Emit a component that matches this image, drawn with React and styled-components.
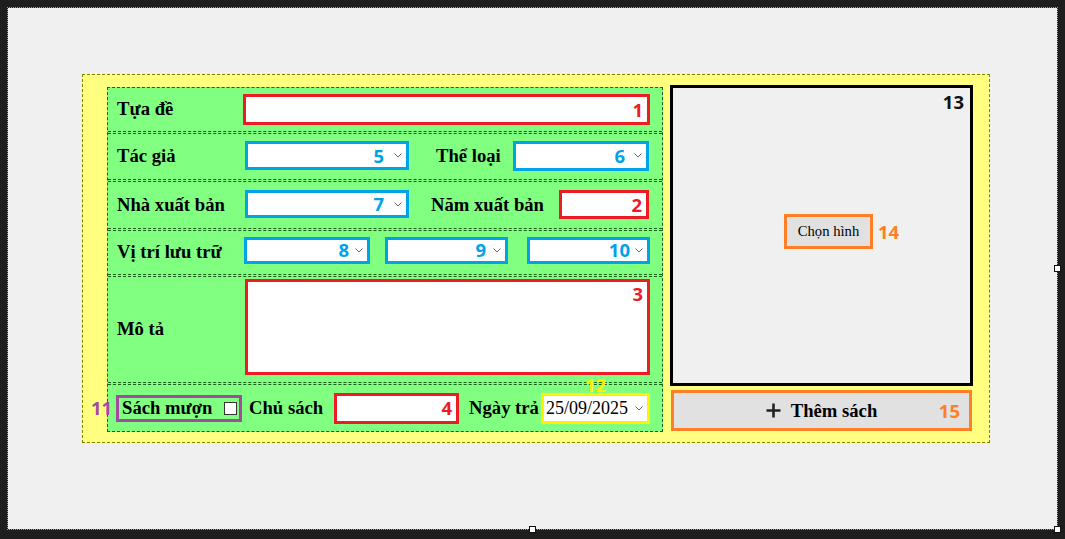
import React from "react";
import styled, { createGlobalStyle } from "styled-components";

const GlobalStyle = createGlobalStyle`
  html, body { margin: 0; padding: 0; background: #1e1e1e; }
  body { font-family: "Liberation Serif", "Times New Roman", serif; }
  * { box-sizing: border-box; }
`;

const RED = "#ed1c24";
const BLUE = "#00a2e8";
const ORANGE = "#ff7f27";
const PURPLE = "#a349a4";
const YELLOW = "#fff200";

const Screen = styled.div`
  position: relative;
  width: 1065px;
  height: 539px;
  padding: 8px 8px 10px 8px;
  background: #1e1e1e;
  overflow: hidden;
`;

const Canvas = styled.div`
  width: 100%;
  height: 100%;
  background: #f0f0f0;
  outline: 1px dotted #9a9a9a;
  padding: 66px 0 0 74px;
`;

const Handle = styled.span`
  position: absolute;
  left: ${(p) => p.x}px;
  top: ${(p) => p.y}px;
  width: 7px;
  height: 7px;
  background: #fff;
  border: 1px solid #111;
`;

const Board = styled.div`
  width: 908px;
  height: 369px;
  background: #ffff80;
  border: 1px dashed #808000;
  display: flex;
  align-items: flex-start;
  padding: 10px 0 0 24px;
`;

const Table = styled.div`
  width: 556px;
  height: 345px;
  margin-top: 2px;
  background: #80ff80;
  border: 1px dashed #1d5e1d;
  display: flex;
  flex-direction: column;
  gap: 1px;
`;

const Row = styled.div`
  height: ${(p) => p.h}px;
  display: flex;
  align-items: center;
  border-top: ${(p) => (p.first ? "none" : "1px dashed #1d5e1d")};
  border-bottom: ${(p) => (p.last ? "none" : "1px dashed #1d5e1d")};
  padding-left: ${(p) => p.pad || 0}px;
`;

const Label = styled.div`
  width: ${(p) => p.w}px;
  padding-left: ${(p) => p.pl}px;
  flex-shrink: 0;
  font-weight: 700;
  font-size: 18.67px;
  line-height: 1;
  color: #000;
  white-space: nowrap;
`;

const Num = styled.span`
  font-family: "Open Sans", "DejaVu Sans", sans-serif;
  font-weight: 700;
  font-size: 18.5px;
  line-height: 18px;
  color: ${(p) => p.c};
`;

const TextBox = styled.div`
  position: relative;
  width: ${(p) => p.w}px;
  height: ${(p) => p.h}px;
  flex-shrink: 0;
  margin-bottom: ${(p) => p.lift || 0}px;
  background: #fff;
  border: 3px solid ${(p) => p.c};
  display: flex;
  justify-content: flex-end;
  align-items: ${(p) => (p.top ? "flex-start" : "center")};
  padding: ${(p) => (p.top ? "3px 4px 0 0" : "0 4px 0 0")};
`;

const Combo = styled.div`
  width: ${(p) => p.w}px;
  height: ${(p) => p.h}px;
  flex-shrink: 0;
  margin-bottom: ${(p) => p.lift || 0}px;
  background: #fff;
  border: 3px solid ${BLUE};
  display: flex;
  justify-content: flex-end;
  align-items: center;
  gap: ${(p) => p.gap}px;
  padding-right: 4px;
`;

const Spacer = styled.div`
  width: ${(p) => p.w}px;
  flex-shrink: 0;
`;

const Borrow = styled.div`
  position: relative;
  width: 126px;
  height: 27px;
  flex-shrink: 0;
  border: 3px solid ${PURPLE};
  display: flex;
  align-items: center;
  justify-content: space-between;
  padding: 0 2px 0 3px;
  font-weight: 700;
  font-size: 18.67px;
  line-height: 1;
`;

const Check = styled.span`
  width: 13px;
  height: 13px;
  background: #fff;
  border: 1px solid #333;
`;

const Badge = styled.div`
  position: absolute;
  left: ${(p) => p.left}px;
  top: ${(p) => p.top}px;
`;

const DateBox = styled.div`
  position: relative;
  width: 109px;
  height: 31px;
  flex-shrink: 0;
  background: #fff;
  border: 3px solid ${YELLOW};
  display: flex;
  align-items: center;
  justify-content: space-between;
  padding: 0 4px 0 2px;
  font-size: 18px;
  color: #000;
`;

const Side = styled.div`
  margin-left: 7px;
  display: flex;
  flex-direction: column;
  align-items: flex-start;
`;

const Picture = styled.div`
  width: 303px;
  height: 301px;
  border: 3px solid #000;
  background: #f0f0f0;
  display: flex;
  flex-direction: column;
`;

const PicNum = styled.div`
  align-self: flex-end;
  margin: 5px 6px 0 0;
  display: flex;
`;

const PickRow = styled.div`
  margin-top: 103px;
  padding-left: 111px;
  display: flex;
  align-items: center;
  gap: 5px;
`;

const PickButton = styled.div`
  width: 89px;
  height: 35px;
  border: 3px solid ${ORANGE};
  background: #e1e1e1;
  display: flex;
  align-items: center;
  justify-content: center;
  font-size: 14.67px;
  color: #000;
`;

const AddButton = styled.div`
  position: relative;
  width: 301px;
  height: 41px;
  margin: 4px 0 0 1px;
  border: 3px solid ${ORANGE};
  background: #e1e1e1;
  display: flex;
  align-items: center;
  justify-content: center;
  gap: 10px;
  font-weight: 700;
  font-size: 18.67px;
  color: #000;
`;

const AddNum = styled.div`
  position: absolute;
  right: 9px;
  top: 0;
  bottom: 0;
  display: flex;
  align-items: center;
`;

const Chevron = () => (
  <svg width="8" height="5" viewBox="0 0 8 5">
    <polyline points="0.5,0.5 4,4 7.5,0.5" fill="none" stroke="#666" strokeWidth="1" />
  </svg>
);

const Plus = () => (
  <svg width="15" height="15" viewBox="0 0 15 15">
    <path d="M7.5 0.5v14M0.5 7.5h14" stroke="#222" strokeWidth="2.6" />
  </svg>
);

function ComboBox({ w, h, n, gap, lift }) {
  return (
    <Combo w={w} h={h} gap={gap} lift={lift}>
      <Num c={BLUE}>{n}</Num>
      <Chevron />
    </Combo>
  );
}

export default function App() {
  return (
    <>
      <GlobalStyle />
      <Screen>
        <Canvas>
          <Board>
            <Table>
              <Row h={44} first>
                <Label w={135} pl={9}>Tựa đề</Label>
                <TextBox w={407} h={31} c={RED}>
                  <Num c={RED}>1</Num>
                </TextBox>
              </Row>
              <Row h={47}>
                <Label w={137} pl={9}>Tác giả</Label>
                <ComboBox w={164} h={29} n="5" gap={10} lift={2} />
                <Label w={104} pl={27}>Thể loại</Label>
                <ComboBox w={136} h={30} n="6" gap={9} lift={2} />
              </Row>
              <Row h={48}>
                <Label w={137} pl={9}>Nhà xuất bản</Label>
                <ComboBox w={164} h={28} n="7" gap={10} lift={2} />
                <Label w={150} pl={22}>Năm xuất bản</Label>
                <TextBox w={90} h={29} c={RED} lift={1}>
                  <Num c={RED}>2</Num>
                </TextBox>
              </Row>
              <Row h={45}>
                <Label w={136} pl={9}>Vị trí lưu trữ</Label>
                <ComboBox w={126} h={27} n="8" gap={6} lift={5} />
                <Spacer w={15} />
                <ComboBox w={123} h={27} n="9" gap={7} lift={5} />
                <Spacer w={19} />
                <ComboBox w={123} h={27} n="10" gap={5} lift={5} />
              </Row>
              <Row h={107}>
                <Label w={137} pl={9}>Mô tả</Label>
                <TextBox w={405} h={96} c={RED} top lift={6}>
                  <Num c={RED}>3</Num>
                </TextBox>
              </Row>
              <Row h={47} last pad={8}>
                <Borrow>
                  <Badge left={-28} top={1}>
                    <Num c={PURPLE}>11</Num>
                  </Badge>
                  <span>Sách mượn</span>
                  <Check />
                </Borrow>
                <Label w={92} pl={7}>Chủ sách</Label>
                <TextBox w={125} h={31} c={RED}>
                  <Num c={RED}>4</Num>
                </TextBox>
                <Label w={82} pl={10}>Ngày trả</Label>
                <DateBox>
                  <Badge left={41} top={-20}>
                    <Num c={YELLOW}>12</Num>
                  </Badge>
                  <span>25/09/2025</span>
                  <Chevron />
                </DateBox>
              </Row>
            </Table>
            <Side>
              <Picture>
                <PicNum>
                  <Num c="#111">13</Num>
                </PicNum>
                <PickRow>
                  <PickButton>Chọn hình</PickButton>
                  <Num c={ORANGE}>14</Num>
                </PickRow>
              </Picture>
              <AddButton>
                <Plus />
                <span>Thêm sách</span>
                <AddNum>
                  <Num c={ORANGE}>15</Num>
                </AddNum>
              </AddButton>
            </Side>
          </Board>
        </Canvas>
        <Handle x={1054} y={265} />
        <Handle x={529} y={526} />
        <Handle x={1054} y={526} />
      </Screen>
    </>
  );
}
